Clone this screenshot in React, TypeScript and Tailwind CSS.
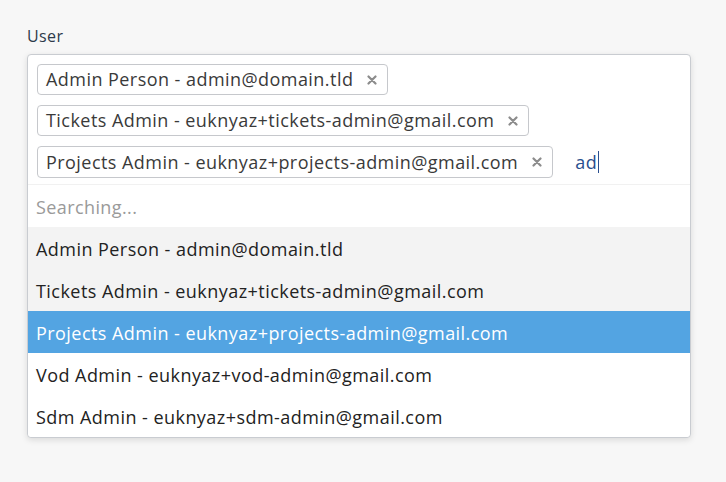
import { useState } from 'react';

interface User {
  name: string;
  email: string;
}

const selected: User[] = [
  { name: 'Admin Person', email: 'admin@domain.tld' },
  { name: 'Tickets Admin', email: 'euknyaz+tickets-admin@gmail.com' },
  { name: 'Projects Admin', email: 'euknyaz+projects-admin@gmail.com' },
];

const options: User[] = [
  ...selected,
  { name: 'Vod Admin', email: 'euknyaz+vod-admin@gmail.com' },
  { name: 'Sdm Admin', email: 'euknyaz+sdm-admin@gmail.com' },
];

function RemoveIcon() {
  return (
    <svg width="10" height="10" viewBox="0 0 10 10" className="ml-[14px] shrink-0">
      <path d="M1.5 1.5L8.5 8.5M8.5 1.5L1.5 8.5" stroke="#8c8c8c" strokeWidth="2.2" strokeLinecap="round" />
    </svg>
  );
}

export default function App() {
  const [query, setQuery] = useState('ad');
  const active = 2;

  return (
    <div className="min-h-[482px] bg-[#f7f7f7] px-[27px] pt-[25px] font-['Open_Sans',sans-serif]">
      <label className="block text-[16px] leading-[22px] tracking-[0.4px] text-[#2d3a4a]">User</label>

      <div className="mt-[7px] w-[664px] rounded-[4px] border border-[#c9ccd1] bg-white shadow-[0_2px_6px_rgba(0,0,0,0.12)]">
        {/* Selected tags */}
        <div className="flex flex-wrap items-center gap-y-[10px] px-[9px] pt-[9px] pb-[6px]">
          {selected.map((u, i) => (
            <span
              key={u.email}
              className={`mr-[22px] flex items-center rounded-[4px] border border-[#c6c8cc] bg-white pl-[8px] pr-[10px] text-[18px] tracking-[0.45px] text-[#3a3a3a] ${
                i === selected.length - 1 ? 'h-[32px]' : 'h-[31px]'
              }`}
            >
              {u.name} - {u.email}
              <RemoveIcon />
            </span>
          ))}
          <span className="flex h-[31px] items-center text-[18px] tracking-[0.4px] text-[#2a4f8f]">
            {query}
            <span className="ml-[1px] inline-block h-[22px] w-[1px] bg-[#2a4f8f]" />
          </span>
          <input className="hidden" value={query} onChange={(e) => setQuery(e.target.value)} />
        </div>

        {/* Dropdown */}
        <div className="border-t border-[#f1f1f1]">
          <div className="flex h-[42px] items-center px-[8px] pt-[3px] text-[18px] tracking-[0.4px] text-[#9a9a9a]">Searching...</div>
          {options.map((u, i) => (
            <div
              key={u.email}
              className={`flex h-[42px] items-center px-[8px] pt-[2px] text-[18px] tracking-[0.45px] ${
                i === active
                  ? 'bg-[#53a4e2] text-white'
                  : i < active
                  ? 'bg-[#f3f3f3] text-[#222]'
                  : 'bg-white text-[#222]'
              } ${i === options.length - 1 ? 'rounded-b-[4px]' : ''}`}
            >
              {u.name} - {u.email}
            </div>
          ))}
        </div>
      </div>
    </div>
  );
}
